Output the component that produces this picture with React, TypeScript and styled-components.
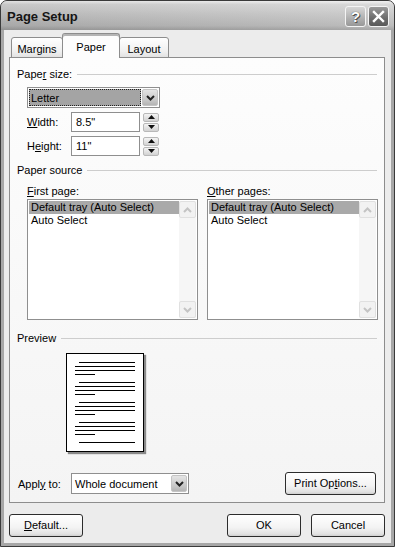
import styled, { createGlobalStyle } from 'styled-components';

const GlobalStyle = createGlobalStyle`
  html, body {
    margin: 0;
    padding: 0;
    background: #fff;
  }
  body {
    font-family: "Liberation Sans", Arial, sans-serif;
    font-size: 11px;
    color: #000;
  }
`;

const Window = styled.div`
  width: 395px;
  height: 547px;
  box-sizing: border-box;
  border: 1px solid #3a3a3a;
  border-radius: 7px 7px 0 0;
  background: #a7a7a7;
  display: flex;
  flex-direction: column;
  overflow: hidden;
`;

const TitleBar = styled.div`
  height: 29px;
  flex: none;
  display: flex;
  align-items: center;
  justify-content: space-between;
  padding: 0 5px 0 6px;
  background:
    linear-gradient(to right, rgba(0, 0, 0, 0.06), rgba(255, 255, 255, 0.12)),
    linear-gradient(to bottom, #f0f0f0 0%, #d4d4d4 12%, #c2c2c2 50%, #b3b3b3 85%, #9a9a9a 100%);
`;

const Title = styled.span`
  font-family: "Liberation Sans", Arial, sans-serif;
  font-weight: bold;
  font-size: 13px;
  color: #151515;
  padding-top: 1px;
`;

const TitleButtons = styled.div`
  display: flex;
  gap: 2px;
  padding-top: 2px;
`;

const TitleButton = styled.div<{ $close?: boolean }>`
  width: 21px;
  height: 21px;
  box-sizing: border-box;
  border: 1px solid #f4f4f4;
  border-radius: 3px;
  display: flex;
  align-items: center;
  justify-content: center;
  background: ${(p) =>
    p.$close
      ? 'linear-gradient(to bottom, #9a9a9a, #6c6c6c 60%, #5a5a5a)'
      : 'linear-gradient(to bottom, #d6d6d6, #b0b0b0 60%, #989898)'};
  color: #fff;
  font-weight: bold;
  font-size: 15px;
  text-shadow: 0 0 1px #333, 1px 1px 0 #555;
`;

const Client = styled.div`
  flex: 1;
  margin: 0 3px 3px;
  background: #ececec;
  display: flex;
  flex-direction: column;
  padding: 4px 6px 6px 5px;
  min-height: 0;
`;

const TabStrip = styled.div`
  height: 24px;
  display: flex;
  align-items: flex-end;
  padding-left: 2px;
  margin-bottom: -1px;
  position: relative;
  z-index: 1;
`;

const Tab = styled.div<{ $active?: boolean; $w: number }>`
  width: ${(p) => p.$w}px;
  height: ${(p) => (p.$active ? 25 : 21)}px;
  box-sizing: border-box;
  margin-left: -1px;
  border: 1px solid #8d8d8d;
  border-bottom: ${(p) => (p.$active ? 'none' : '1px solid #8d8d8d')};
  border-radius: 3px 3px 0 0;
  background: ${(p) =>
    p.$active ? '#fdfdfd' : 'linear-gradient(to bottom, #ffffff, #f0f0f0 70%, #e2e2e2)'};
  box-shadow: ${(p) => (p.$active ? 'inset 0 2px 0 #b5b5b5' : 'none')};
  text-align: center;
  padding-top: ${(p) => (p.$active ? 7 : 5)}px;
  &:first-child {
    margin-left: 0;
  }
`;

const Panel = styled.div`
  flex: 1;
  border: 1px solid #8d8d8d;
  background: linear-gradient(to bottom, #fdfdfd, #f4f4f4);
  display: flex;
  flex-direction: column;
  padding: 10px 7px 7px 7px;
`;

const GroupHeader = styled.div<{ $top?: number }>`
  display: flex;
  align-items: center;
  gap: 5px;
  height: 13px;
  line-height: 13px;
  margin-top: ${(p) => p.$top ?? 0}px;
  &::after {
    content: '';
    flex: 1;
    height: 1px;
    background: #cdcdcd;
  }
`;

const Key = styled.span`
  text-decoration: underline;
`;

const Indent = styled.div`
  padding-left: 10px;
  display: flex;
  flex-direction: column;
`;

const Combo = styled.div<{ $w: number }>`
  width: ${(p) => p.$w}px;
  height: 21px;
  box-sizing: border-box;
  border: 1px solid #8f8f8f;
  background: #fff;
  display: flex;
  padding: 1px;
`;

const ComboField = styled.div<{ $selected?: boolean }>`
  flex: 1;
  display: flex;
  align-items: center;
  padding-left: 2px;
  background: ${(p) => (p.$selected ? '#a4a4a4' : '#fff')};
  outline: ${(p) => (p.$selected ? '1px dotted #222' : 'none')};
  outline-offset: -1px;
`;

const ComboButton = styled.div`
  width: 16px;
  box-sizing: border-box;
  margin-left: 1px;
  border: 1px solid #c4c4c4;
  border-radius: 2px;
  background: linear-gradient(to bottom, #e4e4e4, #c6c6c6 70%, #b4b4b4);
  display: flex;
  align-items: center;
  justify-content: center;
`;

const FieldRow = styled.div<{ $top: number }>`
  display: flex;
  align-items: center;
  margin-top: ${(p) => p.$top}px;
`;

const FieldLabel = styled.span<{ $w: number }>`
  width: ${(p) => p.$w}px;
  flex: none;
`;

const TextBox = styled.div<{ $w: number }>`
  width: ${(p) => p.$w}px;
  height: 20px;
  box-sizing: border-box;
  border: 1px solid #8f8f8f;
  background: #fff;
  padding-left: 4px;
  display: flex;
  align-items: center;
`;

const Spin = styled.div`
  width: 16px;
  height: 19px;
  margin-left: 3px;
  display: flex;
  flex-direction: column;
  gap: 1px;
`;

const SpinHalf = styled.div`
  flex: 1;
  box-sizing: border-box;
  border: 1px solid #b8b8b8;
  border-radius: 2px;
  background: linear-gradient(to bottom, #f4f4f4, #d2d2d2);
  display: flex;
  align-items: center;
  justify-content: center;
`;

const Columns = styled.div`
  display: grid;
  grid-template-columns: 171px 171px;
  column-gap: 9px;
  padding-left: 10px;
  margin-top: 8px;
`;

const Column = styled.div`
  display: flex;
  flex-direction: column;
  gap: 2px;
`;

const ListBox = styled.div`
  height: 121px;
  box-sizing: border-box;
  border: 1px solid #8f8f8f;
  background: #fff;
  display: flex;
  padding: 1px;
`;

const Items = styled.div`
  flex: 1;
`;

const Item = styled.div<{ $selected?: boolean }>`
  height: 13px;
  line-height: 13px;
  padding-left: 2px;
  background: ${(p) => (p.$selected ? '#a9a9a9' : 'transparent')};
  white-space: nowrap;
`;

const ScrollBar = styled.div`
  width: 17px;
  background: #f6f6f6;
  display: flex;
  flex-direction: column;
  justify-content: space-between;
`;

const ScrollButton = styled.div`
  height: 17px;
  box-sizing: border-box;
  border: 1px solid #e0e0e0;
  border-radius: 2px;
  background: #f2f2f2;
  display: flex;
  align-items: center;
  justify-content: center;
`;

const Page = styled.div`
  width: 78px;
  height: 99px;
  box-sizing: border-box;
  margin: 8px 0 0 49px;
  border: 1px solid #000;
  background: #fff;
  box-shadow: 2px 2px 1px #8a8a8a;
`;

const ApplyRow = styled.div`
  margin-top: auto;
  display: flex;
  align-items: center;
  padding-left: 1px;
  padding-right: 1px;
`;

const Button = styled.div<{ $w: number }>`
  width: ${(p) => p.$w}px;
  height: 23px;
  box-sizing: border-box;
  border: 1px solid #2c2c2c;
  border-radius: 3px;
  background: linear-gradient(to bottom, #ffffff, #f3f3f3 60%, #e2e2e2 90%, #cfcfcf);
  display: flex;
  align-items: center;
  justify-content: center;
  padding-bottom: 1px;
`;

const PushRight = styled.div`
  margin-left: auto;
`;

const Footer = styled.div`
  display: flex;
  gap: 10px;
  margin-top: 11px;
`;

const Chevron = ({ up, color = '#222' }: { up?: boolean; color?: string }) => (
  <svg width="9" height="6" viewBox="0 0 9 6">
    <path
      d={up ? 'M1 5 L4.5 1.5 L8 5' : 'M1 1 L4.5 4.5 L8 1'}
      fill="none"
      stroke={color}
      strokeWidth="2"
    />
  </svg>
);

const SmallArrow = ({ up }: { up?: boolean }) => (
  <svg width="7" height="4" viewBox="0 0 7 4">
    <path d={up ? 'M0 4 L3.5 0 L7 4 Z' : 'M0 0 L3.5 4 L7 0 Z'} fill="#111" />
  </svg>
);

const PageLines = () => {
  const rows: JSX.Element[] = [];
  [8, 28, 48, 68].forEach((y0, i) => {
    rows.push(<line key={`a${i}`} x1="12" x2="68" y1={y0 + 0.5} y2={y0 + 0.5} />);
    rows.push(<line key={`b${i}`} x1="8" x2="68" y1={y0 + 4.5} y2={y0 + 4.5} />);
    rows.push(<line key={`c${i}`} x1="8" x2="68" y1={y0 + 8.5} y2={y0 + 8.5} />);
    rows.push(<line key={`d${i}`} x1="8" x2="28" y1={y0 + 12.5} y2={y0 + 12.5} />);
  });
  rows.push(<line key="last" x1="12" x2="68" y1="88.5" y2="88.5" />);
  return (
    <svg width="76" height="97" viewBox="0 0 76 97" style={{ display: 'block' }}>
      <g stroke="#000" strokeWidth="1">{rows}</g>
    </svg>
  );
};

const ScrollList = ({ items }: { items: string[] }) => (
  <ListBox>
    <Items>
      {items.map((t, i) => (
        <Item key={t} $selected={i === 0}>
          {t}
        </Item>
      ))}
    </Items>
    <ScrollBar>
      <ScrollButton>
        <Chevron up color="#c4c4c4" />
      </ScrollButton>
      <ScrollButton>
        <Chevron color="#c4c4c4" />
      </ScrollButton>
    </ScrollBar>
  </ListBox>
);

const trays = ['Default tray (Auto Select)', 'Auto Select'];

export default function App() {
  return (
    <>
      <GlobalStyle />
      <Window>
        <TitleBar>
          <Title>Page Setup</Title>
          <TitleButtons>
            <TitleButton>?</TitleButton>
            <TitleButton $close>
              <svg width="13" height="13" viewBox="0 0 13 13">
                <path d="M2 2 L11 11 M11 2 L2 11" stroke="#fff" strokeWidth="2.4" strokeLinecap="square" />
              </svg>
            </TitleButton>
          </TitleButtons>
        </TitleBar>

        <Client>
          <TabStrip>
            <Tab $w={52}>Margins</Tab>
            <Tab $w={58} $active>
              Paper
            </Tab>
            <Tab $w={50}>Layout</Tab>
          </TabStrip>

          <Panel>
            <GroupHeader>
              <span>
                Pape<Key>r</Key> size:
              </span>
            </GroupHeader>
            <Indent>
              <FieldRow $top={6}>
                <Combo $w={133}>
                  <ComboField $selected>Letter</ComboField>
                  <ComboButton>
                    <Chevron />
                  </ComboButton>
                </Combo>
              </FieldRow>
              <FieldRow $top={4}>
                <FieldLabel $w={44}>
                  <Key>W</Key>idth:
                </FieldLabel>
                <TextBox $w={69}>8.5"</TextBox>
                <Spin>
                  <SpinHalf>
                    <SmallArrow up />
                  </SpinHalf>
                  <SpinHalf>
                    <SmallArrow />
                  </SpinHalf>
                </Spin>
              </FieldRow>
              <FieldRow $top={4}>
                <FieldLabel $w={44}>
                  H<Key>e</Key>ight:
                </FieldLabel>
                <TextBox $w={69}>11"</TextBox>
                <Spin>
                  <SpinHalf>
                    <SmallArrow up />
                  </SpinHalf>
                  <SpinHalf>
                    <SmallArrow />
                  </SpinHalf>
                </Spin>
              </FieldRow>
            </Indent>

            <GroupHeader $top={8}>
              <span>Paper source</span>
            </GroupHeader>
            <Columns>
              <Column>
                <span>
                  <Key>F</Key>irst page:
                </span>
                <ScrollList items={trays} />
              </Column>
              <Column>
                <span>
                  <Key>O</Key>ther pages:
                </span>
                <ScrollList items={trays} />
              </Column>
            </Columns>

            <GroupHeader $top={12}>
              <span>Preview</span>
            </GroupHeader>
            <Page>
              <PageLines />
            </Page>

            <ApplyRow>
              <FieldLabel $w={53}>
                Appl<Key>y</Key> to:
              </FieldLabel>
              <Combo $w={118}>
                <ComboField>Whole document</ComboField>
                <ComboButton>
                  <Chevron />
                </ComboButton>
              </Combo>
              <PushRight>
                <Button $w={91}>
                  Print Op<Key>t</Key>ions...
                </Button>
              </PushRight>
            </ApplyRow>
          </Panel>

          <Footer>
            <Button $w={74}>
              <Key>D</Key>efault...
            </Button>
            <PushRight>
              <Button $w={74}>OK</Button>
            </PushRight>
            <Button $w={74}>Cancel</Button>
          </Footer>
        </Client>
      </Window>
    </>
  );
}
